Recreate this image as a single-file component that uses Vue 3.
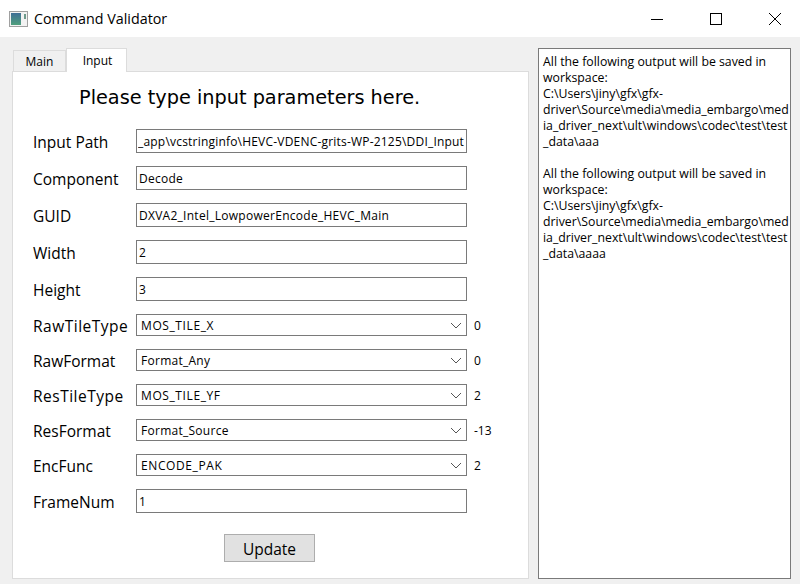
<script setup>
const inputsTop = [
  { label: "Input Path", value: "_app\\vcstringinfo\\HEVC-VDENC-grits-WP-2125\\DDI_Input", scrolled: true },
  { label: "Component", value: "Decode" },
  { label: "GUID", value: "DXVA2_Intel_LowpowerEncode_HEVC_Main" },
  { label: "Width", value: "2" },
  { label: "Height", value: "3" },
]
const combos = [
  { label: "RawTileType", value: "MOS_TILE_X", num: "0", wide: true },
  { label: "RawFormat", value: "Format_Any", num: "0" },
  { label: "ResTileType", value: "MOS_TILE_YF", num: "2", wide: true },
  { label: "ResFormat", value: "Format_Source", num: "-13" },
  { label: "EncFunc", value: "ENCODE_PAK", num: "2" },
]
const output = [
  "All the following output will be saved in",
  "workspace:",
  "C:\\Users\\jiny\\gfx\\gfx-",
  "driver\\Source\\media\\media_embargo\\med",
  "ia_driver_next\\ult\\windows\\codec\\test\\test",
  "_data\\aaa",
  "\u00a0",
  "All the following output will be saved in",
  "workspace:",
  "C:\\Users\\jiny\\gfx\\gfx-",
  "driver\\Source\\media\\media_embargo\\med",
  "ia_driver_next\\ult\\windows\\codec\\test\\test",
  "_data\\aaaa",
]
const isCaps = (text) => text === text.toUpperCase()
</script>

<template>
  <div class="window">
    <header class="titlebar">
      <svg class="app-icon" width="19" height="16" viewBox="0 0 19 16">
        <defs>
          <linearGradient id="icon-fill" x1="0" y1="0" x2="0" y2="1">
            <stop offset="0" stop-color="#3f6f96" />
            <stop offset="1" stop-color="#4f9f7c" />
          </linearGradient>
        </defs>
        <rect x="0.5" y="0.5" width="18" height="15" fill="#f2f2f2" stroke="#a0a0a0" />
        <rect x="2" y="2" width="10" height="12" fill="url(#icon-fill)" />
        <rect x="15" y="3" width="2" height="5" fill="#6f9a8c" />
      </svg>
      <span class="title">Command Validator</span>
      <div class="controls">
        <svg width="14" height="14" viewBox="0 0 14 14"><path d="M1 7.5H13" stroke="#000" fill="none" /></svg>
        <svg width="14" height="14" viewBox="0 0 14 14"><rect x="1.5" y="1.5" width="11" height="11" stroke="#000" fill="none" /></svg>
        <svg width="14" height="14" viewBox="0 0 14 14"><path d="M1 1L13 13M13 1L1 13" stroke="#000" fill="none" /></svg>
      </div>
    </header>

    <main class="body">
      <section class="left">
        <div class="tabs">
          <div class="tab">Main</div>
          <div class="tab active">Input</div>
        </div>
        <div class="panel">
          <h1 class="heading">Please type input parameters here.</h1>

          <div class="rows inputs">
            <div class="row" v-for="item in inputsTop" :key="item.label">
              <label class="label">{{ item.label }}</label>
              <input class="field" :class="{ scrolled: item.scrolled }" type="text" :value="item.value" readonly />
            </div>
          </div>

          <div class="rows combos">
            <div class="row" v-for="item in combos" :key="item.label">
              <label class="label" :class="{ wide: item.wide }">{{ item.label }}</label>
              <div class="field combo">
                <span :class="{ caps: isCaps(item.value) }">{{ item.value }}</span>
                <svg width="12" height="7" viewBox="0 0 12 7"><path d="M1 1L6 6L11 1" stroke="#555" fill="none" /></svg>
              </div>
              <span class="num">{{ item.num }}</span>
            </div>
          </div>

          <div class="row frame">
            <label class="label">FrameNum</label>
            <input class="field" type="text" value="1" readonly />
          </div>

          <div class="actions">
            <button class="update" type="button">Update</button>
          </div>
        </div>
      </section>

      <aside class="output">
        <div v-for="(line, i) in output" :key="i">{{ line }}</div>
      </aside>
    </main>
  </div>
</template>

<style>
html, body { margin: 0; background: #f0f0f0; }
</style>

<style scoped>
.window {
  width: 800px;
  height: 584px;
  overflow: hidden;
  background: #f0f0f0;
  font-family: "Open Sans", "Noto Sans", sans-serif;
  color: #000;
}

.titlebar {
  height: 37px;
  background: #fff;
  display: flex;
  align-items: center;
  padding-left: 9px;
  box-sizing: border-box;
}

.app-icon { margin-right: 6px; }

.title { font-size: 14.3px; }

.controls {
  margin-left: auto;
  display: flex;
  gap: 45px;
  padding-right: 18px;
}

.body {
  display: flex;
  padding: 11px 9px 0 12px;
  gap: 9px;
}

.left { width: 517px; }

.tabs {
  display: flex;
  padding-left: 1px;
  height: 23px;
  align-items: flex-end;
}

.tab {
  width: 53px;
  height: 21px;
  box-sizing: border-box;
  border: 1px solid #dcdcdc;
  border-bottom: none;
  background: #f0f0f0;
  font-size: 12px;
  text-align: center;
  line-height: 22px;
}

.tab.active {
  width: 61px;
  height: 24px;
  padding-left: 2px;
  background: #fff;
  margin-bottom: -1px;
  position: relative;
  line-height: 24px;
}

.panel {
  height: 508px;
  box-sizing: border-box;
  background: #fff;
  border: 1px solid #dcdcdc;
  padding-left: 20px;
}

.heading {
  margin: 0;
  padding: 13px 0 0 46px;
  height: 57px;
  box-sizing: border-box;
  font-family: "DejaVu Sans", sans-serif;
  font-weight: normal;
  font-size: 19.3px;
  line-height: 26px;
}

.rows { display: flex; flex-direction: column; }
.inputs { gap: 13px; }
.combos { gap: 13px; margin-top: 13px; }

.row {
  display: flex;
  align-items: center;
  height: 24px;
}

.combos .row { height: 22px; }
.frame { margin-top: 13px; }

.label {
  width: 103px;
  padding-top: 2px;
  font-size: 15.5px;
  flex: none;
}

.label.wide { letter-spacing: 0.5px; }

.field {
  width: 331px;
  height: 24px;
  box-sizing: border-box;
  border: 1px solid #7a7a7a;
  background: #fff;
  padding: 1px 2px 0;
  font-family: inherit;
  font-size: 12px;
  letter-spacing: 0.27px;
  color: #000;
  outline: none;
  margin: 0;
}

.field.scrolled {
  padding: 1px 0 0 1px;
  letter-spacing: 0.2px;
}

.combo {
  height: 22px;
  display: flex;
  align-items: center;
  justify-content: space-between;
  padding: 0 4px;
}

.caps { letter-spacing: 0.6px; }

.num {
  margin-left: 7px;
  font-size: 12px;
}

.actions {
  display: flex;
  padding: 21px 0 0 191px;
}

.update {
  width: 91px;
  height: 28px;
  box-sizing: border-box;
  background: #e1e1e1;
  border: 1px solid #adadad;
  font-family: inherit;
  font-size: 15.5px;
  padding: 2px 0 0;
  color: #000;
}

.output {
  width: 253px;
  height: 531px;
  box-sizing: border-box;
  background: #fff;
  border: 1px solid #7a7a7a;
  padding: 5px 4px;
  font-size: 12.3px;
  line-height: 16px;
  white-space: nowrap;
  overflow: hidden;
}
</style>
